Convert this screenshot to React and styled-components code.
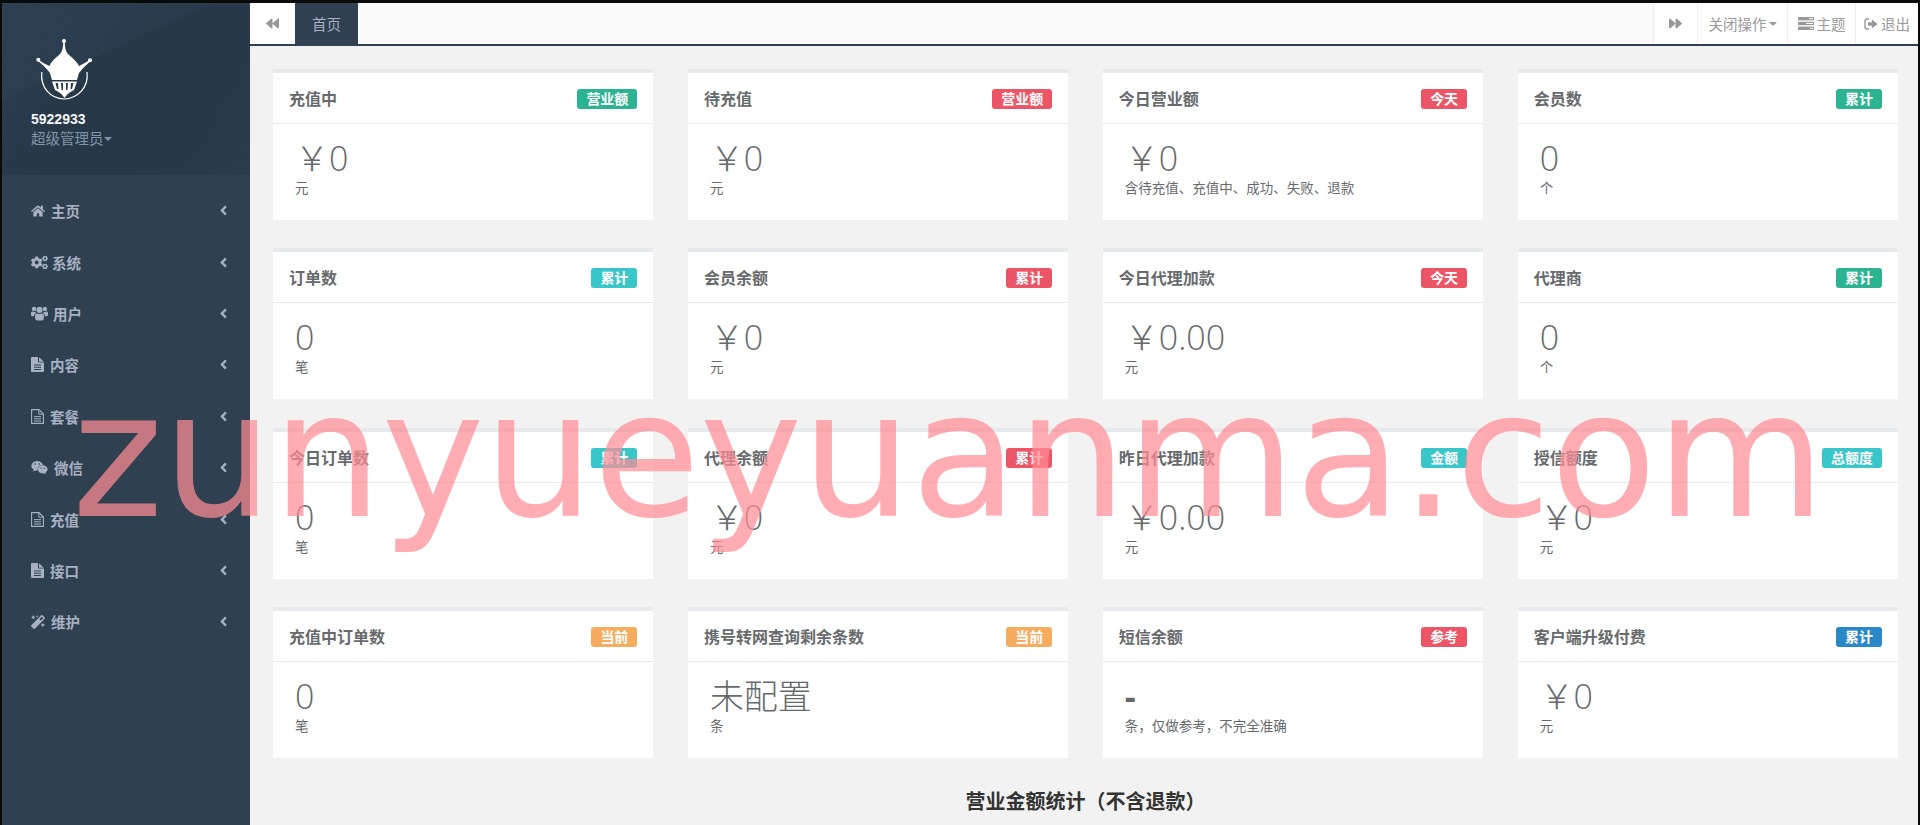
import React from 'react';
import styled, { createGlobalStyle } from 'styled-components';
import {
  FaHome, FaCogs, FaWeixin, FaMagic,
  FaBackward, FaForward, FaAngleLeft,
} from 'react-icons/fa';

const FONT = '"Open Sans", "Noto Sans CJK SC", Arial, sans-serif';

const GlobalStyle = createGlobalStyle`
  html, body {
    margin: 0;
    padding: 0;
    height: 100%;
    overflow: hidden;
    background: #0a0a0a;
  }
  body {
    font-family: ${FONT};
    color: #676a6c;
  }
`;

const Frame = styled.div`
  height: 825px;
  box-sizing: border-box;
  padding: 3px 2px 0;
  background: #0a0a0a;
  display: flex;
  position: relative;
  overflow: hidden;
`;

const Sidebar = styled.aside`
  width: 248px;
  flex: none;
  background: #2f4050;
  display: flex;
  flex-direction: column;
`;

const Profile = styled.div`
  height: 172px;
  box-sizing: border-box;
  padding: 35px 0 0 29px;
  background:
    linear-gradient(155deg, rgba(58, 82, 100, 0.16) 0 34%, transparent 34%),
    linear-gradient(120deg, #2a3d4e 0%, #263747 55%, #2a3b4b 100%);
`;

const LogoBox = styled.div`
  width: 80px;
  height: 68px;
  margin-left: -6px;
  svg { display: block; }
`;

const UserName = styled.div`
  margin-top: 3px;
  font: bold 14px/20px "Liberation Sans", Arial, sans-serif;
  color: #f4f6f8;
`;

const UserRole = styled.div`
  font-size: 14.5px;
  line-height: 20px;
  color: #8095a8;
  display: flex;
  align-items: center;
`;

const Caret = styled.span`
  display: inline-block;
  width: 0;
  height: 0;
  margin-left: ${(p) => p.$gap}px;
  border-top: 4px solid ${(p) => p.$color};
  border-left: 4px solid transparent;
  border-right: 4px solid transparent;
`;

const Menu = styled.nav`
  padding-top: 10px;
  display: flex;
  flex-direction: column;
`;

const MenuItem = styled.a`
  height: 51.4px;
  box-sizing: border-box;
  padding: 0 19px 0 29px;
  display: flex;
  align-items: center;
  color: #a7b1c2;
  font-size: 14.5px;
  font-weight: 700;
  svg { flex: none; }
`;

const MenuLabel = styled.span`
  margin-left: ${(p) => p.$gap}px;
  flex: 1;
`;

const Main = styled.main`
  flex: 1;
  min-width: 0;
  background: #f2f2f2;
  display: flex;
  flex-direction: column;
`;

const TopBar = styled.header`
  height: 43px;
  flex: none;
  box-sizing: border-box;
  background: #fafafa;
  border-bottom: 2px solid #2f4050;
  display: flex;
  font-size: 14.5px;
  color: #999;
`;

const BarButton = styled.div`
  width: ${(p) => p.$w}px;
  flex: none;
  background: #fff;
  display: flex;
  align-items: center;
  justify-content: center;
  gap: 3px;
  box-sizing: border-box;
  border-left: ${(p) => (p.$line ? '1px solid #eee' : '0')};
`;

const ActiveTab = styled.div`
  width: 63px;
  flex: none;
  background: #2f4050;
  color: #a7b1c2;
  display: flex;
  align-items: center;
  justify-content: center;
`;

const BarSpacer = styled.div`
  flex: 1;
`;

const Content = styled.div`
  padding: 23px 20px 0 23px;
`;

const CardGrid = styled.div`
  display: grid;
  grid-template-columns: repeat(4, 1fr);
  column-gap: 34.5px;
  row-gap: 28.4px;
`;

const Card = styled.section`
  height: 151px;
  box-sizing: border-box;
  background: #fff;
  border-top: 4px solid #e7eaec;
`;

const CardHead = styled.div`
  height: 51px;
  box-sizing: border-box;
  padding: 0 16px 0 16px;
  border-bottom: 1px solid #e7eaec;
  display: flex;
  align-items: center;
  justify-content: space-between;
`;

const CardTitle = styled.h5`
  margin: 0;
  font-size: 16px;
  font-weight: 700;
  color: #676a6c;
`;

const Badge = styled.span`
  height: 20px;
  padding: 0 9px;
  margin-top: 2px;
  border-radius: 3px;
  background: ${(p) => p.$color};
  color: #fff;
  font-size: 14px;
  font-weight: 700;
  line-height: 20px;
`;

const CardBody = styled.div`
  padding: 13px 0 0 22px;
`;

const Amount = styled.div`
  font-size: 34px;
  font-weight: ${(p) => (p.$heavy ? 700 : 300)};
  line-height: 42px;
  color: #676a6c;
`;

const Note = styled.div`
  font-size: 13.5px;
  line-height: 18px;
  color: #676a6c;
`;

const SectionTitle = styled.h3`
  margin: 31px 0 0;
  text-align: center;
  font-size: 20px;
  font-weight: 700;
  line-height: 26px;
  color: #333;
`;

const Watermark = styled.div`
  position: absolute;
  left: 72px;
  top: 351px;
  font-family: "DejaVu Sans", sans-serif;
  font-size: 174px;
  letter-spacing: -0.8px;
  line-height: 210px;
  white-space: nowrap;
  color: rgba(255, 140, 150, 0.72);
  pointer-events: none;
`;

function CrownLogo() {
  return (
    <svg width="80" height="68" viewBox="0 8 80 68" fill="#fff">
      <circle cx="39" cy="11" r="2" />
      <circle cx="13.3" cy="29.7" r="2" />
      <circle cx="65" cy="30.3" r="2" />
      <path d="M38.3 12 L39.7 12 C40 19 41 22 44 25 C48 28 52 32 54 36 C56 35 60 33 64.7 30 L65.4 31.2 C61 35 57 39 54 43 L52 50 L27 50 L25 43 C22 39 18 35 13 31 L13.7 29.8 C18 33 22 35 24.5 36 C26 32 30 28 34 25 C37 22 38 19 38.3 12 Z" />
      <path fillRule="evenodd" d="M27 51.5 H52 L49 60 Q43 63 41 66 L39.5 68 L38 66 Q36 63 30 60 Z M30.5 53 L32 59 L33.5 59 L33 53 Z M36 53 L36.5 60 L38 60 L38 53 Z M41 53 L41 60 L42.5 60 L43 53 Z M46 53 L45.5 59 L47 59 L48.5 53 Z" />
      <path d="M16.8 42 C15 58 26 68.5 39 69 C52 68.5 64 58 62 42" fill="none" stroke="#fff" strokeWidth="1.2" />
    </svg>
  );
}

function UsersIcon({ size }) {
  return (
    <svg width={size} height={size * 0.85} viewBox="0 0 20 17" fill="currentColor">
      <circle cx="10" cy="4.6" r="3.6" />
      <circle cx="3.6" cy="3.4" r="2.6" />
      <circle cx="16.4" cy="3.4" r="2.6" />
      <path d="M4.8 12 C4.8 9.4 6.6 8.6 8 9 C9.2 9.6 10.8 9.6 12 9 C13.4 8.6 15.2 9.4 15.2 12 V14.2 C15.2 16 14 17 12.6 17 H7.4 C6 17 4.8 16 4.8 14.2 Z" />
      <path d="M0 8.6 C0 7 1 6.4 2 6.6 C3 7.1 4 7.1 5.2 6.8 C5.2 7.6 5.6 8.2 6 8.6 C4.4 9 3.6 10.4 3.6 12 H1.4 C0.6 12 0 11.4 0 10.6 Z" />
      <path d="M20 8.6 C20 7 19 6.4 18 6.6 C17 7.1 16 7.1 14.8 6.8 C14.8 7.6 14.4 8.2 14 8.6 C15.6 9 16.4 10.4 16.4 12 H18.6 C19.4 12 20 11.4 20 10.6 Z" />
    </svg>
  );
}

function FileIcon({ solid }) {
  return solid ? (
    <svg width="13" height="15" viewBox="0 0 13 15" fill="currentColor">
      <path fillRule="evenodd" d="M0.8 0 H7 V4.8 Q7 5.6 7.8 5.6 H13 V14.2 Q13 15 12.2 15 H0.8 Q0 15 0 14.2 V0.8 Q0 0 0.8 0 Z M3 7.5 V8.5 H10 V7.5 Z M3 9.7 V10.7 H10 V9.7 Z M3 11.9 V12.9 H10 V11.9 Z" />
      <path d="M8 0.2 L12.8 4.7 H8 Z" />
    </svg>
  ) : (
    <svg width="13" height="15" viewBox="0 0 13 15" fill="none" stroke="currentColor">
      <path d="M0.6 0.6 H8 L12.4 5 V14.4 H0.6 Z" strokeWidth="1.1" />
      <path d="M7.8 0.8 V5.2 H12.2" strokeWidth="1" />
      <path d="M3 7.6 H10 M3 9.8 H10 M3 12 H10" strokeWidth="1" />
    </svg>
  );
}

function TasksIcon() {
  return (
    <svg width="16" height="13" viewBox="0 0 16 13" fill="#999">
      <rect y="0" width="16" height="3.4" />
      <rect y="4.8" width="16" height="3.4" />
      <rect y="9.6" width="16" height="3.4" />
      <rect x="11" y="1.2" width="4" height="1" fill="#fff" />
      <rect x="8" y="6" width="7" height="1" fill="#fff" />
      <rect x="12" y="10.8" width="3" height="1" fill="#fff" />
    </svg>
  );
}

function SignOutIcon() {
  return (
    <svg width="14" height="12" viewBox="0 0 14 12">
      <path d="M5 1 H3 Q1 1 1 3 V9 Q1 11 3 11 H5" fill="none" stroke="#999" strokeWidth="1.4" />
      <path d="M4 4.2 H8 V1.4 L13.6 6 L8 10.6 V7.8 H4 Z" fill="#999" />
    </svg>
  );
}

const green = '#2cb392';
const red = '#ec5566';
const cyan = '#38c6c8';
const orange = '#f6ac5f';
const blue = '#2a87c8';

const menu = [
  { label: '主页', icon: <FaHome size={14} />, gap: 6 },
  { label: '系统', icon: <FaCogs size={17} />, gap: 4 },
  { label: '用户', icon: <UsersIcon size={17} />, gap: 5 },
  { label: '内容', icon: <FileIcon solid />, gap: 6 },
  { label: '套餐', icon: <FileIcon />, gap: 6 },
  { label: '微信', icon: <FaWeixin size={17} />, gap: 6 },
  { label: '充值', icon: <FileIcon />, gap: 6 },
  { label: '接口', icon: <FileIcon solid />, gap: 6 },
  { label: '维护', icon: <FaMagic size={14} />, gap: 6 },
];

const YUAN = '\uFFE5';

const cards = [
  { title: '充值中', badge: '营业额', color: green, value: `${YUAN}0`, note: '元' },
  { title: '待充值', badge: '营业额', color: red, value: `${YUAN}0`, note: '元' },
  { title: '今日营业额', badge: '今天', color: red, value: `${YUAN}0`, note: '含待充值、充值中、成功、失败、退款' },
  { title: '会员数', badge: '累计', color: green, value: '0', note: '个' },
  { title: '订单数', badge: '累计', color: cyan, value: '0', note: '笔' },
  { title: '会员余额', badge: '累计', color: red, value: `${YUAN}0`, note: '元' },
  { title: '今日代理加款', badge: '今天', color: red, value: `${YUAN}0.00`, note: '元' },
  { title: '代理商', badge: '累计', color: green, value: '0', note: '个' },
  { title: '今日订单数', badge: '累计', color: cyan, value: '0', note: '笔' },
  { title: '代理余额', badge: '累计', color: red, value: `${YUAN}0`, note: '元' },
  { title: '昨日代理加款', badge: '金额', color: cyan, value: `${YUAN}0.00`, note: '元' },
  { title: '授信额度', badge: '总额度', color: cyan, value: `${YUAN}0`, note: '元' },
  { title: '充值中订单数', badge: '当前', color: orange, value: '0', note: '笔' },
  { title: '携号转网查询剩余条数', badge: '当前', color: orange, value: '未配置', note: '条' },
  { title: '短信余额', badge: '参考', color: red, value: '-', note: '条，仅做参考，不完全准确' },
  { title: '客户端升级付费', badge: '累计', color: blue, value: `${YUAN}0`, note: '元' },
];

export default function App() {
  return (
    <>
      <GlobalStyle />
      <Frame>
        <Sidebar>
          <Profile>
            <LogoBox>
              <CrownLogo />
            </LogoBox>
            <UserName>5922933</UserName>
            <UserRole>
              超级管理员<Caret $color="#8095a8" $gap={0} />
            </UserRole>
          </Profile>
          <Menu>
            {menu.map(({ label, icon, gap }) => (
              <MenuItem key={label}>
                {icon}
                <MenuLabel $gap={gap}>{label}</MenuLabel>
                <FaAngleLeft size={15} />
              </MenuItem>
            ))}
          </Menu>
        </Sidebar>
        <Main>
          <TopBar>
            <BarButton $w={45}>
              <FaBackward size={13} />
            </BarButton>
            <ActiveTab>首页</ActiveTab>
            <BarSpacer />
            <BarButton $w={44} $line>
              <FaForward size={13} />
            </BarButton>
            <BarButton $w={90} $line>
              <span>关闭操作</span>
              <Caret $color="#999" $gap={-1} />
            </BarButton>
            <BarButton $w={68} $line>
              <TasksIcon /> 主题
            </BarButton>
            <BarButton $w={63} $line>
              <SignOutIcon /> 退出
            </BarButton>
          </TopBar>
          <Content>
            <CardGrid>
              {cards.map((card) => (
                <Card key={card.title}>
                  <CardHead>
                    <CardTitle>{card.title}</CardTitle>
                    <Badge $color={card.color}>{card.badge}</Badge>
                  </CardHead>
                  <CardBody>
                    <Amount $heavy={card.value === '-'}>{card.value}</Amount>
                    <Note>{card.note}</Note>
                  </CardBody>
                </Card>
              ))}
            </CardGrid>
            <SectionTitle>营业金额统计（不含退款）</SectionTitle>
          </Content>
        </Main>
        <Watermark>zunyueyuanma.com</Watermark>
      </Frame>
    </>
  );
}
